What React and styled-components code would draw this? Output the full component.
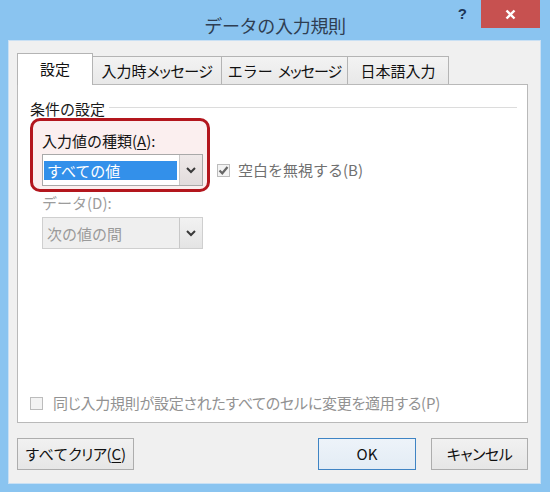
import React from "react";
import styled, { createGlobalStyle } from "styled-components";

const GlobalStyle = createGlobalStyle`
  html, body {
    margin: 0;
    padding: 0;
    background: #8ac4f0;
  }
  body {
    font-family: "Noto Sans CJK JP", "Noto Sans", sans-serif;
  }
`;

const Chevron = () => (
  <svg width="10" height="7" viewBox="0 0 10 7">
    <polyline points="1,1 5,5 9,1" fill="none" stroke="#3a3a3a" strokeWidth="2" />
  </svg>
);

const CheckMark = () => (
  <svg width="11" height="11" viewBox="0 0 11 11">
    <polyline points="1.5,5.5 4.3,8.3 9.5,2" fill="none" stroke="#666" strokeWidth="2.2" />
  </svg>
);

const CloseIcon = () => (
  <svg width="11" height="11" viewBox="0 0 11 11">
    <line x1="1.5" y1="1.5" x2="9.5" y2="9.5" stroke="#fff" strokeWidth="2.4" />
    <line x1="9.5" y1="1.5" x2="1.5" y2="9.5" stroke="#fff" strokeWidth="2.4" />
  </svg>
);

export default function App() {
  const tabs = [
    { label: "設定", w: 76, active: true },
    { label: <>入力時<Narrow>メッセージ</Narrow></>, w: 130 },
    { label: <>エラー<Narrow $gap={5} $ls={-1}>メッセージ</Narrow></>, w: 127 },
    { label: "日本語入力", w: 102 },
  ];

  return (
    <>
      <GlobalStyle />
      <Window>
        <TitleBar>
          <span />
          <Title>データの入力規則</Title>
          <Controls>
            <HelpGlyph>?</HelpGlyph>
            <CloseButton>
              <CloseIcon />
            </CloseButton>
          </Controls>
        </TitleBar>

        <Client>
          <TabList>
            {tabs.map((t, i) => (
              <Tab key={i} $active={t.active} $w={t.w}>
                {t.label}
              </Tab>
            ))}
          </TabList>

          <Panel>
            <GroupHeader>条件の設定</GroupHeader>

            <FieldRow>
              <Highlight>
                <FieldLabel>
                  入力値の種類(<u>A</u>):
                </FieldLabel>
                <Select>
                  <Selection>すべての値</Selection>
                  <DropButton $tint>
                    <Chevron />
                  </DropButton>
                </Select>
              </Highlight>
              <CheckRow $tone="#707070" $lift>
                <CheckBox>
                  <CheckMark />
                </CheckBox>
                空白を無視する(B)
              </CheckRow>
            </FieldRow>

            <FieldLabel $muted $indent>
              データ(D):
            </FieldLabel>
            <Select $disabled $indent>
              <SelectText>次の値の間</SelectText>
              <DropButton>
                <Chevron />
              </DropButton>
            </Select>

            <CheckRow $tone="#929292" $bottom>
              <CheckBox />
              <Narrow $ls={-0.25}>同じ入力規則が設定されたすべてのセルに変更を適用する(P)</Narrow>
            </CheckRow>
          </Panel>

          <ButtonRow>
            <Button $w={117}>
              すべて<Narrow>クリア</Narrow>(<u>C</u>)
            </Button>
            <Spacer />
            <Button $w={98} $default>
              OK
            </Button>
            <Button $w={97}>
              <Narrow>キャンセル</Narrow>
            </Button>
          </ButtonRow>
        </Client>
      </Window>
    </>
  );
}

const Narrow = styled.span`
  font-feature-settings: "palt";
  letter-spacing: ${(p) => p.$ls ?? -0.5}px;
  margin-left: ${(p) => p.$gap ?? 0}px;
`;

const Window = styled.div`
  width: 550px;
  height: 492px;
  background: #8ac4f0;
  display: flex;
  flex-direction: column;
  box-sizing: border-box;
`;

const TitleBar = styled.div`
  height: 41px;
  flex: none;
  display: grid;
  grid-template-columns: 1fr auto 1fr;
`;

const Title = styled.div`
  padding-top: 13px;
  font-size: 18px;
  line-height: 24px;
  color: #2f3e52;
  letter-spacing: -0.3px;
`;

const Controls = styled.div`
  display: flex;
  justify-content: flex-end;
  align-items: flex-start;
  padding-right: 10px;
`;

const HelpGlyph = styled.span`
  margin-top: 5px;
  margin-right: 14px;
  font-family: "Liberation Sans", sans-serif;
  font-size: 15px;
  font-weight: bold;
  line-height: 18px;
  color: #1d3757;
`;

const CloseButton = styled.div`
  width: 59px;
  height: 28px;
  background: #c75150;
  display: flex;
  align-items: center;
  justify-content: center;
`;

const Client = styled.div`
  flex: 1;
  margin: 0 10px 9px 9px;
  padding: 12px 12px 13px 8px;
  background: #f0f0f0;
  box-shadow: 0 0 0 1px #c9e0f4;
  display: flex;
  flex-direction: column;
  box-sizing: border-box;
`;

const TabList = styled.div`
  display: flex;
  align-items: flex-end;
  height: 31px;
  flex: none;
`;

const Tab = styled.div`
  position: relative;
  z-index: ${(p) => (p.$active ? 2 : 1)};
  width: ${(p) => p.$w}px;
  height: ${(p) => (p.$active ? 32 : 28)}px;
  margin-bottom: ${(p) => (p.$active ? -1 : 0)}px;
  margin-left: -1px;
  box-sizing: border-box;
  border: 1px solid #b4b4b4;
  border-bottom: none;
  background: ${(p) =>
    p.$active ? "#fff" : "linear-gradient(#f3f3f3, #e8e8e8)"};
  display: flex;
  align-items: center;
  justify-content: center;
  padding-bottom: ${(p) => (p.$active ? 2 : 0)}px;
  font-size: 15px;
  line-height: 18px;
  color: #111;
  white-space: nowrap;

  &:first-child {
    margin-left: 0;
  }
`;

const Panel = styled.div`
  flex: 1;
  background: #fff;
  border: 1px solid #b9b9b9;
  padding: 16px 10px 11px 12px;
  display: flex;
  flex-direction: column;
  align-items: flex-start;
  box-sizing: border-box;
`;

const GroupHeader = styled.div`
  align-self: stretch;
  display: flex;
  align-items: center;
  gap: 4px;
  font-size: 15px;
  line-height: 16px;
  color: #1a1a1a;

  &::after {
    content: "";
    flex: 1;
    height: 1px;
    margin-top: -3px;
    background: #dcdcdc;
  }
`;

const FieldRow = styled.div`
  display: flex;
  align-items: flex-end;
  margin-top: 1px;
`;

const Highlight = styled.div`
  width: 180px;
  height: 74px;
  box-sizing: border-box;
  border: 3px solid #b3161d;
  border-radius: 10px;
  background: #fbefef;
  padding: 12px 4px 0 9px;
  display: flex;
  flex-direction: column;
  gap: 5px;
`;

const FieldLabel = styled.div`
  font-size: 15px;
  line-height: 16px;
  color: ${(p) => (p.$muted ? "#9c9c9c" : "#141414")};
  margin: ${(p) => (p.$indent ? "3px 0 0 12px" : "0")};
  white-space: nowrap;

  u {
    text-underline-offset: 2px;
  }
`;

const Select = styled.div`
  width: 161px;
  height: 32px;
  box-sizing: border-box;
  border: 1px solid ${(p) => (p.$disabled ? "#cfcfcf" : "#a9a9a9")};
  background: ${(p) => (p.$disabled ? "#efefef" : "#fff")};
  display: flex;
  align-items: center;
  margin: ${(p) => (p.$indent ? "6px 0 0 12px" : "0")};
`;

const Selection = styled.div`
  flex: 1;
  height: 19px;
  margin: 0 2px 0 1px;
  padding-left: 3px;
  background: #3390ea;
  color: #fff;
  font-size: 15px;
  line-height: 19px;
`;

const SelectText = styled.div`
  flex: 1;
  padding-left: 4px;
  color: #9a9a9a;
  font-size: 15px;
  line-height: 19px;
`;

const DropButton = styled.div`
  width: 23px;
  align-self: stretch;
  box-sizing: border-box;
  border-left: 1px solid #c8c8c8;
  background: ${(p) =>
    p.$tint
      ? "linear-gradient(#efe9e9, #e2dcdc)"
      : "linear-gradient(#f2f2f2, #e4e4e4)"};
  display: flex;
  align-items: center;
  justify-content: center;
`;

const CheckRow = styled.div`
  display: flex;
  align-items: center;
  gap: ${(p) => (p.$bottom ? 10 : 8)}px;
  font-size: 15px;
  line-height: 16px;
  color: ${(p) => p.$tone};
  white-space: nowrap;
  margin-left: ${(p) => (p.$lift ? 7 : 0)}px;
  margin-bottom: ${(p) => (p.$lift ? 14 : 0)}px;
  margin-top: ${(p) => (p.$bottom ? "auto" : 0)};
`;

const CheckBox = styled.span`
  width: 13px;
  height: 13px;
  box-sizing: border-box;
  border: 1px solid #bcbcbc;
  background: #f3f3f3;
  display: flex;
  align-items: center;
  justify-content: center;
  flex: none;
`;

const ButtonRow = styled.div`
  display: flex;
  gap: 15px;
  margin-top: 15px;
  height: 32px;
  flex: none;
`;

const Spacer = styled.div`
  flex: 1;
`;

const Button = styled.div`
  width: ${(p) => p.$w}px;
  box-sizing: border-box;
  border: 1px solid ${(p) => (p.$default ? "#3f84c4" : "#adadad")};
  background: ${(p) =>
    p.$default
      ? "linear-gradient(#edf3f9, #e3ecf5)"
      : "linear-gradient(#f1f1f1, #e6e6e6)"};
  display: flex;
  align-items: center;
  justify-content: center;
  font-size: 15px;
  line-height: 18px;
  color: #111;
  white-space: nowrap;

  u {
    text-underline-offset: 2px;
  }
`;
